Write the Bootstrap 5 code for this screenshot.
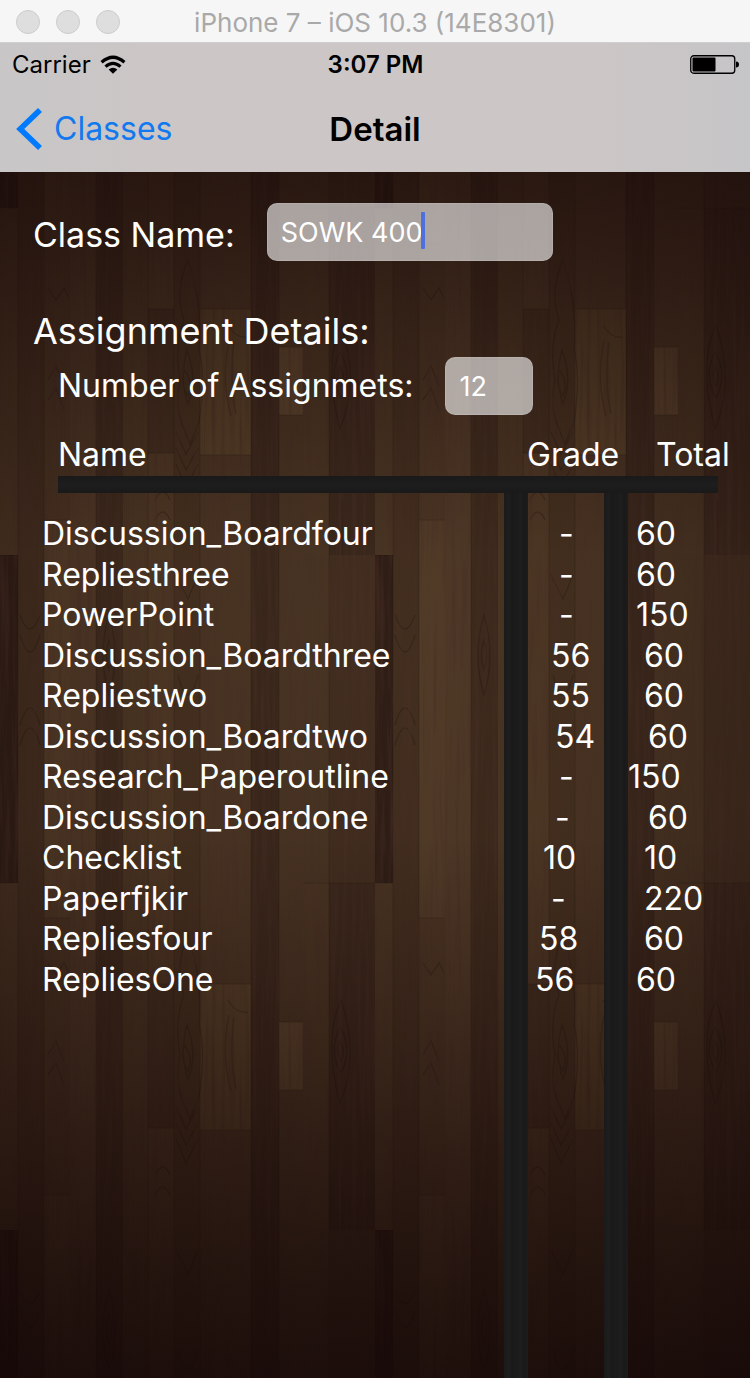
<!DOCTYPE html>
<html lang="en">
<head>
<meta charset="utf-8">
<meta name="viewport" content="width=device-width, initial-scale=1">
<title>Detail</title>
<link href="https://cdn.jsdelivr.net/npm/bootstrap@5.3.0/dist/css/bootstrap.min.css" rel="stylesheet">
<style>
  body { font-family: Inter, "Liberation Sans", sans-serif; background: #f6f6f6; color: #fff; }

  /* simulator window title bar */
  .window-bar { height: 43px; padding: 0 16px; background: #f6f6f6; border-bottom: 1px solid #cfcfcf; }
  .window-dot { width: 24px; height: 24px; background: #dedede; border: 1px solid #cdcdcd; }
  .window-title { font-size: 26px; line-height: 42px; padding-top: 2px; color: #a9a9a9; }
  .bar-grid { display: grid; grid-template-columns: 1fr auto 1fr; align-items: center; }

  /* iOS status and navigation bars */
  .ios-top { background: linear-gradient(90deg, #c8c6c7, #ccc6c6 20%, #ccc6c6 80%, #c6c5c7); color: #000; }
  .status-bar { height: 43px; padding: 0 11px 0 12px; font-size: 24px; line-height: 43px; }
  .carrier { gap: 9px; }
  .nav-bar-ios { height: 86px; padding: 0 16px; font-size: 33px; line-height: 84px; }
  .back-link { color: #1279ef; font-size: 32px; }

  /* wooden floor: a tiled plank drawing under a vignette */
  .wood {
    background-color: #37251a;
    background-image:
      linear-gradient(rgba(22,7,6,.55), rgba(22,7,6,.28) 14%, rgba(22,7,6,0) 32%, rgba(22,7,6,0) 55%, rgba(22,7,6,.3) 75%, rgba(16,4,4,.68)),
      radial-gradient(ellipse 95% 85% at 50% 40%, rgba(24,8,6,.04) 0, rgba(24,8,6,.12) 35%, rgba(22,7,6,.36) 70%, rgba(14,2,3,.6) 100%),
      url("data:image/svg+xml,%3Csvg xmlns='http://www.w3.org/2000/svg' width='375' height='675'%3E%3Cfilter id='g' x='0' y='0' width='100%25' height='100%25'%3E%3CfeTurbulence type='fractalNoise' baseFrequency='.22 .009' numOctaves='4' seed='8' stitchTiles='stitch'/%3E%3CfeColorMatrix values='0 0 0 0 .07 0 0 0 0 .03 0 0 0 0 .02 1.5 0 0 0 -.66'/%3E%3C/filter%3E%3Crect width='375' height='675' fill='%234b3623'/%3E%3Cg fill='%23443020'%3E%3Cpath fill='%23301f17' d='M0 0h18v328H0z'/%3E%3Cpath fill='%234b3724' d='M0 328h18v347H0z'/%3E%3Cpath d='M18 0h26v675H18z'/%3E%3Cpath fill='%23543e29' d='M44 0h26v363H44zM44 640h26v35H44z'/%3E%3Cpath fill='%234d3825' d='M44 363h26v277H44z'/%3E%3Cpath fill='%23513b28' d='M70 0h26v675H70z'/%3E%3Cpath fill='%233f2c1e' d='M96 0h27v675H96z'/%3E%3Cpath fill='%234c3824' d='M123 0h25v675h-25z'/%3E%3Cpath fill='%23503a26' d='M148 0h26v675h-26z'/%3E%3Cpath d='M148 429h26v144h-26z'/%3E%3Cpath fill='%23463220' d='M174 0h26v675h-26z'/%3E%3Cpath fill='%234c3725' d='M200 0h51v675h-51z'/%3E%3Cpath fill='%23584229' d='M200 429h51v146h-51z'/%3E%3Cpath fill='%233c291d' d='M251 0h28v675h-28z'/%3E%3Cpath fill='%234a3624' d='M279 0h24v675h-24z'/%3E%3Cpath fill='%235d462e' d='M279 467h24v68h-24z'/%3E%3Cpath fill='%23493624' d='M303 0h26v675h-26z'/%3E%3Cpath fill='%234b3724' d='M303 328h26v347h-26z'/%3E%3Cpath fill='%23432f20' d='M329 0h46v675h-46z'/%3E%3Cpath fill='%233c291d' d='M329 328h46v347h-46z'/%3E%3C/g%3E%3Cg fill='none' stroke='%23140b06' stroke-opacity='.26'%3E%3Cpath d='M18 0v675M44 0v675M96 0v675M148 0v675M174 0v675M200 0v675M251 0v675M279 0v675M329 0v675M0 328h18M0 .5h18M44 640h26M44 363h26M148 429h26M148 573h26M200 429h51M200 575h51M279 467h24M279 535h24M303 328h72'/%3E%3Cpath stroke-width='1.5' d='M188 380q-14 32-4 60-10 25-4 60-5 26 2 44l8 20 9-22q7-45 0-72 4-45-11-90zM187 470q-8 28 1 54 10-24-1-54zM184 490q-4 15 4 26 6-15-4-26zM176 552l10 22 12-22M176 568l10 22 12-22M176 584l10 24 12-24M341 445q-18 38-1 104 20-48 1-104zM340 472q-12 24 1 46 12-24-1-46zM340 486q-4 10 1 20 5-10-1-20zM228 445q8 14 20 12M229 460q-8 40 2 76M234 462q-5 40 2 72M48 408l8 12 8-12 5 10M48 500l8-14 8 20M48 520l8-12 8 22M20 60q10 28 20 0M20 80q10 34 20 0M20 170q10-34 20 0M20 190q10-34 20 0M176 20l12 24 10-24M178 120q10 40 20 0M109 60q-12 40 0 80 12-40 0-80zM109 85q-5 15 0 30 5-15 0-30zM342 620v55M155 640q8-16 15 0M155 620q8-16 15 0'/%3E%3C/g%3E%3Crect width='375' height='675' filter='url(%23g)'/%3E%3C/svg%3E");
    background-position: 0 0, 0 0, 0 383px;
    background-size: 100% 100%, 100% 100%, 375px 675px;
  }

  .form-zone { padding: 31px 33px 0; }
  .class-label { font-size: 34px; line-height: 64px; }
  .section-title { font-size: 36px; line-height: 48px; margin: 40px 0 2px; font-weight: 400; }
  .count-row { padding-left: 25px; }
  .count-label { font-size: 32px; line-height: 58px; }
  .field-row { gap: 32px; }
  .glass, .glass:focus {
    height: 58px; padding: 0 13px; border: 1px solid rgba(255,255,255,.12); border-radius: 10px;
    background: rgba(255,255,255,.6); color: #fff; font-size: 27px; line-height: 56px; box-shadow: none;
  }
  .field-class { width: 286px; }
  .field-count { width: 88px; }
  .text-caret { left: 154px; top: 9px; width: 4px; height: 37px; background: #4d70df; border-radius: 1px; }

  /* gradebook: a crossbar under the headings, two rails running down */
  .ledger {
    --slat: repeating-linear-gradient(90deg, #1a1a1a 0, #1e1e1e 5px, #191919 8px, #1c1c1c 12px);
    padding-top: 20px;
    background-repeat: no-repeat;
    background-image: linear-gradient(#191919, #1e1e1e 50%, #191919), var(--slat), var(--slat);
    background-size: calc(100% - 90px) 17px, 24px 100%, 24px 100%;
    background-position: 58px 61px, right 222px top 78px, right 122px top 78px;
  }
  .ledger table { table-layout: fixed; width: 100%; font-size: 32px; line-height: 40px; }
  .ledger th { height: 79px; padding: 0; font-weight: 400; vertical-align: top; }
  .ledger td { padding: 0; white-space: nowrap; }
  .ledger tbody tr:nth-child(even) { line-height: 41px; }
  .ledger th.col-name { padding-left: 58px; }
  .ledger td.col-name { padding-left: 42px; }
  .w-grade { width: 101px; }
  .w-total { width: 122px; }
  .ledger .in-4 { padding-left: 4px; }
  .ledger .in-8 { padding-left: 8px; }
  .ledger .in-12 { padding-left: 12px; }
  .ledger .in-16 { padding-left: 16px; }
  .ledger .in-20 { padding-left: 20px; }
  .ledger .in-24 { padding-left: 24px; }
  .ledger .in-28 { padding-left: 28px; }
  .ledger .in-32 { padding-left: 32px; }
</style>
</head>
<body>
<div class="d-flex flex-column min-vh-100">
  <header>
    <div class="window-bar bar-grid">
      <div class="d-flex gap-3">
        <span class="window-dot rounded-circle"></span>
        <span class="window-dot rounded-circle"></span>
        <span class="window-dot rounded-circle"></span>
      </div>
      <div class="window-title">iPhone 7 – iOS 10.3 (14E8301)</div>
    </div>
    <div class="ios-top">
      <div class="status-bar bar-grid">
        <div class="carrier d-flex align-items-center">
          <span>Carrier</span>
          <svg width="26" height="20" viewBox="0 0 26 20" aria-hidden="true"><g fill="none" stroke="#000" stroke-width="3.2"><path d="M1.6 7.3Q13-2.8 24.400 7.300"/><path d="M5.500 11.600Q13 5 20.500 11.600"/></g><path d="M13 18.800L8.600 14.400Q13 11 17.400 14.400z"/></svg>
        </div>
        <div class="fw-semibold">3:07 PM</div>
        <svg class="ms-auto" width="49" height="20" viewBox="0 0 49 20" aria-hidden="true"><rect x=".75" y=".75" width="44" height="17.500" rx="3" fill="none" stroke="#000" stroke-width="1.300"/><rect x="2.500" y="2.500" width="23" height="14" rx="1"/><path d="M46 6.500q3 0 3 3t-3 3z"/></svg>
      </div>
      <nav class="nav-bar-ios bar-grid">
        <a href="#" class="back-link text-decoration-none d-flex align-items-center">
          <svg class="me-2" width="30" height="42" viewBox="0 0 30 42" aria-hidden="true"><path d="M24 2L4.200 21 24 40" fill="none" stroke="#007aff" stroke-width="5.600"/></svg>
          <span>Classes</span>
        </a>
        <div class="fw-semibold">Detail</div>
      </nav>
    </div>
  </header>

  <main class="wood flex-grow-1 d-flex flex-column">
    <form class="form-zone">
      <div class="field-row d-flex align-items-start">
        <label class="class-label" for="className">Class Name:</label>
        <div class="position-relative">
          <input id="className" class="form-control glass field-class" type="text" value="SOWK 400">
          <span class="text-caret position-absolute"></span>
        </div>
      </div>
      <h1 class="section-title">Assignment Details:</h1>
      <div class="count-row field-row d-flex align-items-center">
        <label class="count-label" for="count">Number of Assignmets:</label>
        <input id="count" class="form-control glass field-count" type="text" value="12">
      </div>
    </form>

    <div class="ledger flex-grow-1">
      <table>
        <colgroup><col><col class="w-grade"><col class="w-total"></colgroup>
        <thead>
          <tr><th class="col-name" scope="col">Name</th><th scope="col">Grade</th><th class="in-28" scope="col">Total</th></tr>
        </thead>
        <tbody>
          <tr><td class="col-name">Discussion_Boardfour</td><td class="in-32">-</td><td class="in-8">60</td></tr>
          <tr><td class="col-name">Repliesthree</td><td class="in-32">-</td><td class="in-8">60</td></tr>
          <tr><td class="col-name">PowerPoint</td><td class="in-32">-</td><td class="in-8">150</td></tr>
          <tr><td class="col-name">Discussion_Boardthree</td><td class="in-24">56</td><td class="in-16">60</td></tr>
          <tr><td class="col-name">Repliestwo</td><td class="in-24">55</td><td class="in-16">60</td></tr>
          <tr><td class="col-name">Discussion_Boardtwo</td><td class="in-28">54</td><td class="in-20">60</td></tr>
          <tr><td class="col-name">Research_Paperoutline</td><td class="in-32">-</td><td>150</td></tr>
          <tr><td class="col-name">Discussion_Boardone</td><td class="in-28">-</td><td class="in-20">60</td></tr>
          <tr><td class="col-name">Checklist</td><td class="in-16">10</td><td class="in-16">10</td></tr>
          <tr><td class="col-name">Paperfjkir</td><td class="in-24">-</td><td class="in-16">220</td></tr>
          <tr><td class="col-name">Repliesfour</td><td class="in-12">58</td><td class="in-16">60</td></tr>
          <tr><td class="col-name">RepliesOne</td><td class="in-8">56</td><td class="in-8">60</td></tr>
        </tbody>
      </table>
    </div>
  </main>
</div>
<script src="https://cdn.jsdelivr.net/npm/bootstrap@5.3.0/dist/js/bootstrap.bundle.min.js"></script>
</body>
</html>
